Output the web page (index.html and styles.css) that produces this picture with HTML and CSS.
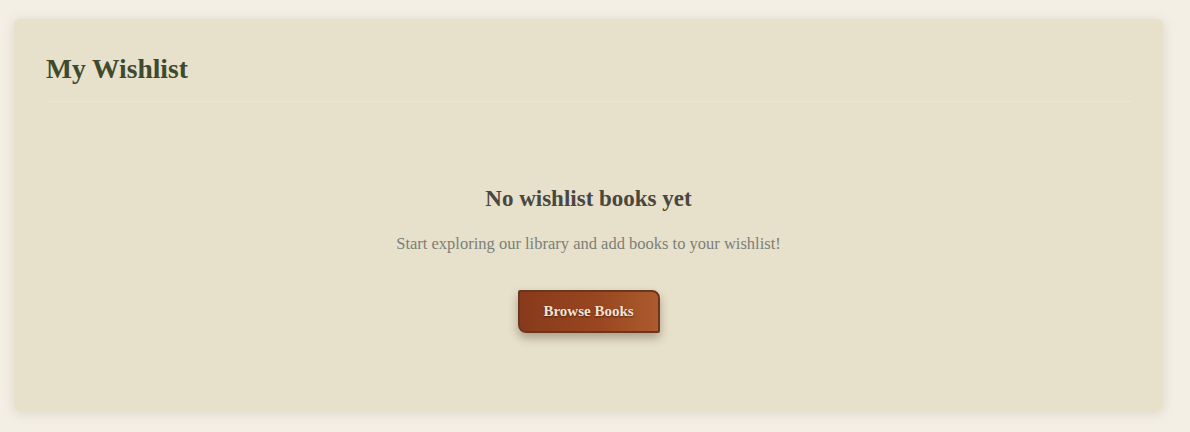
FILE: index.html
```html
<!DOCTYPE html>
<html>
<head>
<meta charset="utf-8">
<link rel="stylesheet" href="styles.css">
</head>
<body>
<main class="page">
  <section class="card">
    <header class="card-header">
      <h1 class="card-title">My Wishlist</h1>
    </header>
    <div class="empty">
      <h2 class="empty-title">No wishlist books yet</h2>
      <p class="empty-text">Start exploring our library and add books to your wishlist!</p>
      <button class="btn-browse">Browse Books</button>
    </div>
  </section>
</main>
</body>
</html>
```
FILE: styles.css
```css
* { box-sizing: border-box; }
html, body { margin: 0; padding: 0; }
body {
  background: #f3efe5;
  font-family: "Liberation Serif", "DejaVu Serif", serif;
  width: 1190px;
  height: 432px;
  overflow: hidden;
}
.page {
  padding: 19px 27px 0 14px;
}
.card {
  background: #e7e0cb;
  border-radius: 6px;
  box-shadow: 0 2px 12px rgba(120, 100, 60, 0.18);
  padding: 32px 32px 0 32px;
  height: 392px;
}
.card-header {
  border-bottom: 1px solid #ece6d5;
  padding-bottom: 14px;
}
.card-title {
  margin: 0;
  font-size: 27.5px;
  line-height: 36px;
  font-weight: 700;
  color: #3e4a2e;
}
.empty {
  display: flex;
  flex-direction: column;
  align-items: center;
  padding-top: 81px;
}
.empty-title {
  margin: 0;
  font-size: 23px;
  line-height: 32px;
  font-weight: 700;
  color: #4a4640;
}
.empty-text {
  margin: 17px 0 0;
  font-size: 16.5px;
  line-height: 24px;
  color: #7b7f78;
}
.btn-browse {
  margin-top: 34px;
  width: 142px;
  height: 43px;
  font-family: inherit;
  font-size: 15px;
  font-weight: 700;
  color: #f3e2d2;
  text-shadow: 0 1px 2px rgba(40, 10, 0, 0.6);
  background: linear-gradient(90deg, #873a1c 0%, #98461f 55%, #ac5a2e 100%);
  border: 2px solid #6a371d;
  border-radius: 2px 8px 2px 8px;
  box-shadow: 0 5px 10px rgba(60, 40, 20, 0.35);
  cursor: pointer;
}
```
